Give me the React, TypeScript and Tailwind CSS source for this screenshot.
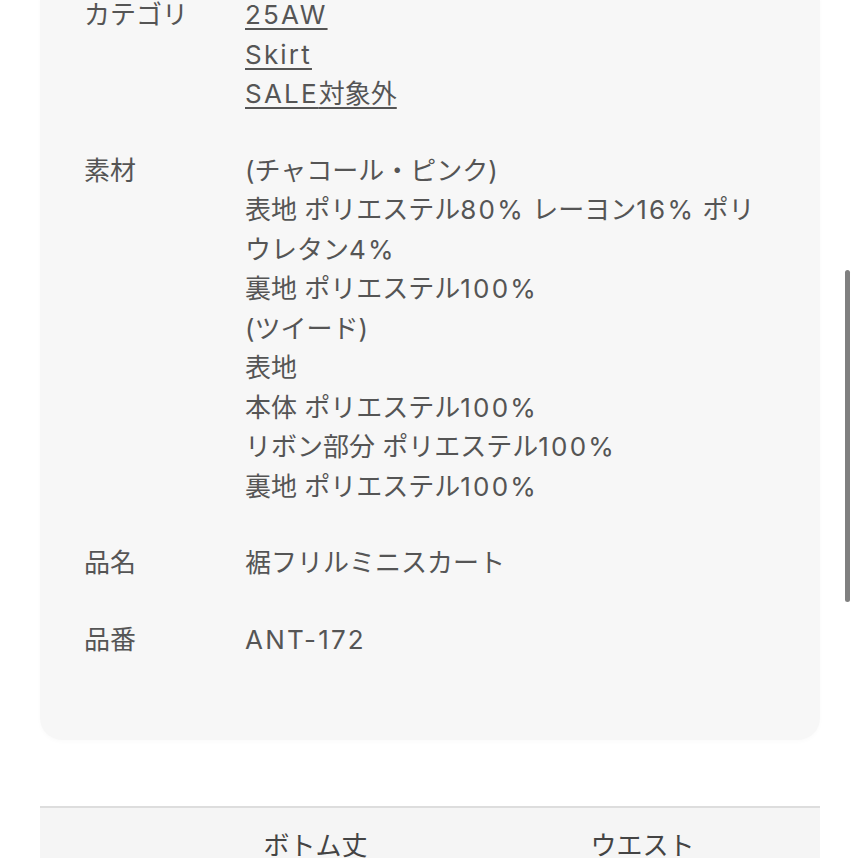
const rows: { label: string; lines: string[]; link?: boolean }[] = [
  { label: "カテゴリ", lines: ["25AW", "Skirt", "SALE対象外"], link: true },
  {
    label: "素材",
    lines: [
      "(チャコール・ピンク)",
      "表地 ポリエステル80% レーヨン16% ポリ",
      "ウレタン4%",
      "裏地 ポリエステル100%",
      "(ツイード)",
      "表地",
      "本体 ポリエステル100%",
      "リボン部分 ポリエステル100%",
      "裏地 ポリエステル100%",
    ],
  },
  { label: "品名", lines: ["裾フリルミニスカート"] },
  { label: "品番", lines: ["ANT-172"] },
];

// latin runs are a bit wider in the original font
const Txt = ({ text }: { text: string }) => (
  <>
    {text.split(/([A-Za-z0-9%\-]+)/).map((part, i) =>
      /^[A-Za-z0-9%\-]+$/.test(part) ? (
        <span key={i} className="tracking-[2.2px]">
          {part}
        </span>
      ) : (
        <span key={i}>{part}</span>
      )
    )}
  </>
);

export default function App() {
  return (
    <div
      className="relative w-[858px] h-[858px] overflow-hidden bg-white text-[#555555] text-[26px] leading-[39.5px]"
      style={{ fontFamily: '"Inter", "Noto Sans CJK JP", sans-serif' }}
    >
      <div className="mx-[40px] w-[780px] bg-[#f7f7f7] rounded-b-[22px] pl-[44px] pb-[81px] shadow-[0_2px_4px_rgba(0,0,0,0.02)]">
        <div className="-mt-[5px] flex flex-col gap-[37px]">
          {rows.map((row) => (
            <div key={row.label} className="flex">
              <div className="w-[161px] shrink-0">{row.label}</div>
              <div className="flex flex-col">
                {row.lines.map((line) =>
                  row.link ? (
                    <a
                      key={line}
                      className="underline decoration-[1.5px] underline-offset-[4px] w-fit"
                    >
                      <Txt text={line} />
                    </a>
                  ) : (
                    <span key={line} className="whitespace-nowrap">
                      <Txt text={line} />
                    </span>
                  )
                )}
              </div>
            </div>
          ))}
        </div>
      </div>

      <div className="mx-[40px] mt-[66px] w-[780px] border-t-2 border-[#dddddd] bg-[#f5f5f5]">
        <div className="grid grid-cols-[112px_327px_327px] pt-[18px] text-[#444444]">
          <div></div>
          <div className="text-center">ボトム丈</div>
          <div className="text-center">ウエスト</div>
        </div>
      </div>

      <div className="absolute left-[845px] top-[270px] w-[5px] h-[332px] rounded-full bg-[#808080]" />
    </div>
  );
}
